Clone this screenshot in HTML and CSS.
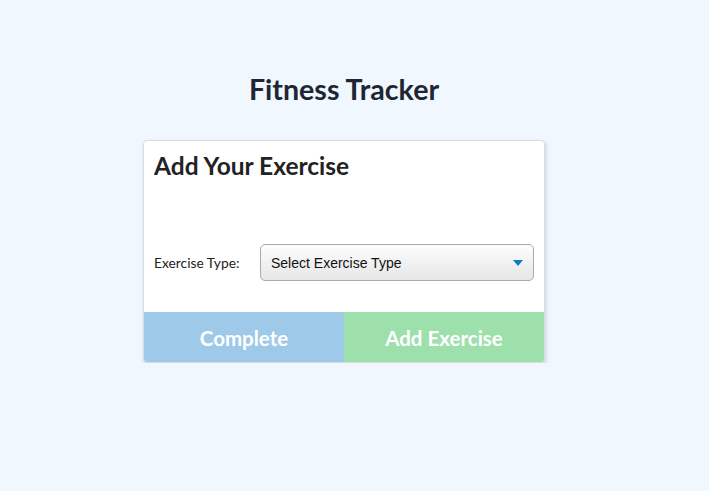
FILE: index.html
```html
<!DOCTYPE html>
<html lang="en">
<head>
    <meta charset="UTF-8">
    <meta name="viewport" content="width=device-width, initial-scale=1.0">
    <title>Fitness Tracker</title>
    <link rel="stylesheet" href="styles.css">
</head>
<body>
    <h1 class="page-title">Fitness Tracker</h1>
    <div class="card">
        <div class="card-body">
            <h2>Add Your Exercise</h2>
            <div class="form-row">
                <label for="exercise-type">Exercise Type:</label>
                <div class="select-wrap">
                    <select id="exercise-type">
                        <option>Select Exercise Type</option>
                        <option>Cardio</option>
                        <option>Resistance</option>
                    </select>
                    <svg class="select-arrow" width="10" height="6" viewBox="0 0 10 6">
                        <path d="M0 0h10L5 6z" fill="#0b7dc2"/>
                    </svg>
                </div>
            </div>
        </div>
        <div class="card-buttons">
            <button class="btn btn-complete">Complete</button>
            <button class="btn btn-add">Add Exercise</button>
        </div>
    </div>
</body>
</html>
```

FILE: styles.css
```css
body {
    margin: 0;
    padding: 72px 21px 0 0;
    background-color: #f0f7ff;
    font-family: Lato, "Open Sans", sans-serif;
    color: #222;
}
.page-title {
    margin: 0 0 34px;
    font-size: 28.6px;
    line-height: 34px;
    text-align: center;
    color: #1f2633;
}
.card {
    width: 400px;
    margin: 0 auto;
    background: #fff;
    border: 1px solid #dcdcdc;
    border-radius: 4px;
    box-shadow: 1px 2px 4px rgba(0, 0, 0, 0.15);
    overflow: hidden;
}
.card-body {
    padding: 10px 10px 31px;
}
.card-body h2 {
    margin: 0;
    font-size: 24.5px;
    line-height: 30px;
    color: #222;
}
.form-row {
    display: flex;
    align-items: center;
    margin-top: 63px;
}
.form-row label {
    width: 106px;
    font-size: 13.8px;
    color: #222;
}
.select-wrap {
    position: relative;
    flex: 1;
}
.select-wrap select {
    appearance: none;
    -webkit-appearance: none;
    width: 100%;
    height: 37px;
    padding: 0 10px;
    border: 1px solid #aaa;
    border-radius: 5px;
    background: linear-gradient(#fdfdfd, #e6e6e6);
    font-family: "Liberation Sans", Arial, sans-serif;
    font-size: 14px;
    color: #111;
}
.select-arrow {
    position: absolute;
    right: 11px;
    top: 16px;
    pointer-events: none;
}
.card-buttons {
    display: flex;
}
.btn {
    flex: 1;
    height: 50px;
    padding-top: 2px;
    border: none;
    font-family: Lato, sans-serif;
    font-weight: bold;
    font-size: 20.5px;
    color: #fff;
    cursor: pointer;
}
.btn-complete {
    background-color: #9ec9e9;
}
.btn-add {
    background-color: #9ee0ac;
}
```
